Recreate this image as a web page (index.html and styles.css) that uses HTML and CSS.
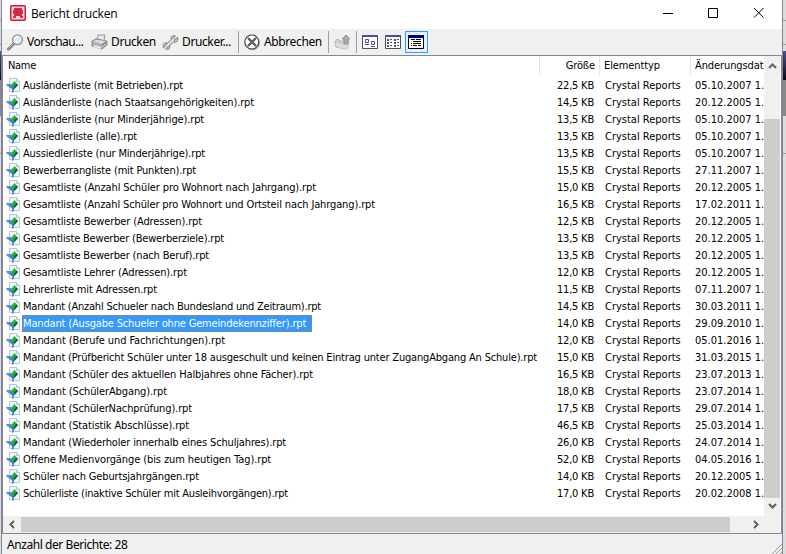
FILE: index.html
```
<!DOCTYPE html>
<html lang="de">
<head>
<meta charset="utf-8">
<title>Bericht drucken</title>
<link rel="stylesheet" href="styles.css">
</head>
<body>
<div class="backdrop left"></div>
<main class="window">
  <header class="titlebar">
    <svg class="app-icon" width="16" height="16" viewBox="0 0 16 16"><rect width="16" height="16" rx="2" fill="#dc143c"/><rect x="1.500" y="1.500" width="13" height="13" rx="1" fill="#f6d5d8"/><path d="M4 3h8v3H4zM3 5h10v4H3zM4 9h8v2H4zM3 11h3v2H3zM10 11h3v2h-3z" fill="#dc3048"/><path d="M5 4.500h6M4 7.500h8M5 10h6" stroke="#a52d40"/></svg>
    <h1>Bericht drucken</h1>
    <svg class="controls" width="110" height="14" viewBox="0 0 110 14" fill="none" stroke="#000"><path d="M1 7.500h10M46.500 2.500h9v9h-9zM92 2l9.500 9.500M101.500 2L92 11.500"/></svg>
  </header>
  <nav class="toolbar">
    <button class="b1"><svg width="17" height="17" viewBox="0 0 17 17"><path d="M1.500 15L7 9.500" stroke="#8c7868" stroke-width="3" stroke-linecap="round"/><path d="M1.500 14.500L6.500 9.500" stroke="#d9c5ae"/><circle cx="10.500" cy="5.800" r="4.900" fill="#dff0fa" stroke="#8b9298" stroke-width="1.300"/><path d="M7.500 5a3 3 0 0 1 4-2" stroke="#fff" fill="none" stroke-width="1.500"/></svg><span>Vorschau...</span></button>
    <button class="b2"><svg width="17" height="17" viewBox="0 0 17 17"><path d="M6 6l1-5h7l-1 6z" fill="#dce7ee" stroke="#99958d"/><path d="M1 7l4-2 11 2v4l-5 4-10-3z" fill="#b2b2b2" stroke="#898989"/><path d="M2 7l3-1 10 1-4 3z" fill="#ddd"/><path d="M3 11l7 2v2l-7-2z" fill="#eee"/><path d="M11 11l4-3" stroke="#666"/></svg><span>Drucken</span></button>
    <button class="b3"><svg width="17" height="17" viewBox="0 0 17 17"><path d="M4.500 12.500L12 5" stroke="#8c8c8c" stroke-width="4"/><path d="M13.500 1.500l-2 2 .5 1.500 1.500.5 2-2c1 3-1 5-4 4.500M3.500 15.500l2-2-.5-1.500-1.500-.5-2 2c-1-3 1-5 4-4.500M12.500 1.500c-3 0-4 2-3 4M5 15.500c2 0 3-2 2.500-4" fill="none" stroke="#8c8c8c" stroke-width="1.200"/><path d="M4.500 12.500L12 5" stroke="#e4e4e4" stroke-width="2.300"/></svg><span>Drucker...</span></button>
    <i class="sep"></i>
    <button class="b4"><svg width="16" height="17" viewBox="0 0 16 17"><circle cx="8.500" cy="8.800" r="7" fill="none" stroke="#aaa"/><circle cx="7.800" cy="8" r="7" fill="#fff" stroke="#444" stroke-width="1.200"/><path d="M4 4l8 8M12 4l-8 8" stroke="#444" stroke-width="2.200"/><path d="M4 4l8 8M12 4l-8 8" stroke="#888" stroke-width=".6"/></svg><span>Abbrechen</span></button>
    <i class="sep"></i>
    <svg class="up" width="17" height="16" viewBox="0 0 17 16"><path d="M1 8l1-2 2-1 2 2h9l-1 7-3 1-9-2z" fill="#ccc" stroke="#b5b5b5"/><path d="M1 9l12 1 2-2-1 6-3 1-8-2z" fill="#dadada"/><path d="M12 1l4 4h-2v5h-4V5H8z" fill="#aaa" stroke="#969696"/></svg>
    <i class="sep"></i>
    <svg class="v1" width="16" height="14" viewBox="0 0 16 14"><path d="M.5.500h15v13H.5z" fill="#fff" stroke="#505050"/><path d="M0 0h16v2H0z" fill="#4b4ba5"/><path d="M3.500 4.500h3v3h-3zM9.500 6.500h3v3h-3zM3 9.500h4M9 11.500h4" fill="none" stroke="#4b4ba5"/></svg>
    <svg class="v2" width="16" height="14" viewBox="0 0 16 14"><path d="M.5.500h15v13H.5z" fill="#fff" stroke="#505050"/><path d="M0 0h16v2H0z" fill="#4b4ba5"/><path d="M2 5h2M2 8h2M2 11h2M9 5h2M9 8h2M9 11h2" stroke="#4b4ba5" stroke-width="2"/><path d="M5 4.500h2M5 7.500h2M5 10.500h2M12 4.500h2M12 7.500h2M12 10.500h2" stroke="#555"/></svg>
    <span class="active"><svg width="16" height="14" viewBox="0 0 16 14"><path d="M.5.500h15v13H.5z" fill="#fff" stroke="#000"/><path d="M0 0h16v3H0z" fill="#000080"/><path d="M3 4.500h4m1 0h5M5 6.500h8M3 8.500h1m1 0h8M3 10.500h1m1 0h4m1 0h3" stroke="#000"/></svg></span>
  </nav>
  <section class="panel">
    <div class="content">
      <div class="heads"><span>Name</span><span>Größe</span><span>Elementtyp</span><span>Änderungsdat</span></div>
      <div id="rows"></div>
    </div>
    <aside class="vscroll"><svg width="9" height="6" viewBox="0 0 9 6"><path d="M1 5l3.500-3.500L8 5" fill="none" stroke="#606060" stroke-width="2"/></svg><div class="vthumb"></div><svg width="9" height="6" viewBox="0 0 9 6"><path d="M1 1l3.500 3.500L8 1" fill="none" stroke="#606060" stroke-width="2"/></svg></aside>
    <div class="hscroll"><svg width="6" height="9" viewBox="0 0 6 9"><path d="M5 1L1.500 4.500 5 8" fill="none" stroke="#606060" stroke-width="2"/></svg><div class="hthumb"></div><svg class="next" width="6" height="9" viewBox="0 0 6 9"><path d="M1 1l3.500 3.500L1 8" fill="none" stroke="#606060" stroke-width="2"/></svg></div>
  </section>
  <footer><span>Anzahl der Berichte: 28</span><svg width="12" height="12" viewBox="0 0 12 12" stroke="#999"><path d="M1 12L12 1M5 12l7-7M9 12l3-3"/></svg></footer>
</main>
<div class="backdrop right"></div>
<script src="rows.js"></script>
</body>
</html>
```
FILE: styles.css
```
* { box-sizing: border-box; }
body { margin: 0; width: 786px; height: 554px; overflow: hidden; display: flex; background: #e5e5e5; color: #000; font: 11px/17px "DejaVu Sans Condensed", "DejaVu Sans", sans-serif; }
svg { flex: none; display: block; }
.backdrop { width: 1px; flex: none; background: linear-gradient(#ddd 0 20px, #999 20px 21px, #ddd 21px 44px, #999 44px 45px, #ddd 45px 51px, #4b5285 51px, #080818 80px, #888 80px 116px, #ddd 116px 153px, #999 153px 154px, #ddd 154px); }
.backdrop.right { width: 3px; }
.window { width: 782px; height: 554px; flex: none; display: flex; flex-direction: column; border: solid #79869b; border-width: 0 1px; }
.titlebar { height: 29px; flex: none; background: #fff; display: flex; padding: 0 10px 0 8px; }
.app-icon { margin-top: 5px; }
h1 { margin: 4px 0 0 5px; font: 12px/20px "Open Sans", sans-serif; letter-spacing: -.15px; white-space: nowrap; }
.controls { margin: 6px 0 0 auto; }
.toolbar { height: 26px; flex: none; background: #f0f0f0; display: flex; align-items: flex-start; padding: 2px 0 0 5px; font: 12px/20px "Noto Sans", sans-serif; letter-spacing: -.38px; }
button { all: unset; box-sizing: border-box; display: flex; height: 22px; flex: none; gap: 3px; white-space: nowrap; }
button svg { margin-top: 3px; }
button span { margin-top: 1px; }
.b1 { width: 84px; letter-spacing: -.5px; }
.b2 { width: 71px; }
.b3 { width: 76px; }
.sep { width: 1px; height: 22px; background: #a0a0a0; flex: none; }
.b4 { width: 89px; padding-left: 5px; gap: 4px; }
.up { margin: 3px 5px 0; }
.v1 { margin: 4px 7px 0 5px; }
.v2 { margin: 4px 4px 0 0; }
.active { width: 23px; height: 22px; border: 1px solid #3399ff; background: #e5f1fb; padding: 3px 0 0 2px; }
.panel { height: 479px; flex: none; border: 1px solid #828790; background: #fff; display: grid; grid-template: 460px 17px / 761px 16px; overflow: hidden; }
.content { overflow: hidden; }
.heads { height: 21px; display: grid; grid-template-columns: 537px 60px 91px 73px; white-space: nowrap; line-height: 18px; letter-spacing: -.1px; background: linear-gradient(#fff 20px, #fff 0); }
.heads span { height: 19px; border-right: 1px solid #e5e5e5; padding: 1px 4px 0; }
.heads span:first-child { padding-left: 5px; letter-spacing: -.3px; }
.heads span:nth-child(2) { text-align: right; }
.heads span:last-child { border: 0; padding-right: 0; }
.row { height: 17px; display: grid; grid-template-columns: 537px 54px 96px 74px; white-space: nowrap; }
.name { display: flex; padding-left: 3px; }
.name svg { margin-top: 1px; }
.label { margin-left: 1px; padding: 0 1px; width: max-content; height: 17px; }
.selected .label { background: #3399ff; color: #fff; outline: 1px dotted #c67631; outline-offset: -1px; padding-right: 6px; }
.size { text-align: right; letter-spacing: -.2px; }
.type { padding-left: 11px; }
.date { padding-left: 5px; }
.vscroll { background: #f0f0f0; display: flex; flex-direction: column; align-items: center; padding-top: 7px; overflow: hidden; }
.vthumb { width: 16px; height: 379px; background: #cdcdcd; margin: 50px 0 5px; flex: none; }
.hscroll { grid-column: 1 / 3; background: #f0f0f0; display: flex; align-items: center; padding-left: 6px; }
.hthumb { height: 15px; width: 709px; background: #cdcdcd; margin-left: 6px; }
.next { margin-left: 23px; }
footer { flex: 1; background: #f0f0f0; padding: 1px 0 0 5px; font: 12px/20px "Noto Sans", sans-serif; letter-spacing: -.43px; display: flex; justify-content: space-between; }
footer svg { align-self: flex-end; }
```
FILE: rows.js
```
// name, size, date, text width in pixels
const reports = [
  ["Ausländerliste (mit Betrieben).rpt", "22,5", "05.10.2007", 160],
  ["Ausländerliste (nach Staatsangehörigkeiten).rpt", "14,5", "20.12.2005", 231],
  ["Ausländerliste (nur Minderjährige).rpt", "13,5", "05.10.2007", 181],
  ["Aussiedlerliste (alle).rpt", "13,5", "05.10.2007", 114],
  ["Aussiedlerliste (nur Minderjährige).rpt", "13,5", "05.10.2007", 182],
  ["Bewerberrangliste (mit Punkten).rpt", "15,5", "27.11.2007", 173],
  ["Gesamtliste (Anzahl Schüler pro Wohnort nach Jahrgang).rpt", "15,0", "20.12.2005", 293],
  ["Gesamtliste (Anzahl Schüler pro Wohnort und Ortsteil nach Jahrgang).rpt", "16,5", "17.02.2011", 352],
  ["Gesamtliste Bewerber (Adressen).rpt", "12,5", "20.12.2005", 179],
  ["Gesamtliste Bewerber (Bewerberziele).rpt", "13,5", "20.12.2005", 201],
  ["Gesamtliste Bewerber (nach Beruf).rpt", "13,5", "20.12.2005", 186],
  ["Gesamtliste Lehrer (Adressen).rpt", "12,0", "20.12.2005", 164],
  ["Lehrerliste mit Adressen.rpt", "11,5", "07.11.2007", 134],
  ["Mandant (Anzahl Schueler nach Bundesland und Zeitraum).rpt", "14,5", "30.03.2011", 298],
  ["Mandant (Ausgabe Schueler ohne Gemeindekennziffer).rpt", "14,0", "29.09.2010", 283],
  ["Mandant (Berufe und Fachrichtungen).rpt", "12,0", "05.01.2016", 202],
  ["Mandant (Prüfbericht Schüler unter 18 ausgeschult und keinen Eintrag unter ZugangAbgang An Schule).rpt", "15,0", "31.03.2015", 514],
  ["Mandant (Schüler des aktuellen Halbjahres ohne Fächer).rpt", "16,5", "23.07.2013", 290],
  ["Mandant (SchülerAbgang).rpt", "18,0", "23.07.2014", 144],
  ["Mandant (SchülerNachprüfung).rpt", "17,5", "29.07.2014", 169],
  ["Mandant (Statistik Abschlüsse).rpt", "46,5", "25.03.2014", 166],
  ["Mandant (Wiederholer innerhalb eines Schuljahres).rpt", "26,0", "24.07.2014", 263],
  ["Offene Medienvorgänge (bis zum heutigen Tag).rpt", "52,0", "04.05.2016", 248],
  ["Schüler nach Geburtsjahrgängen.rpt", "14,0", "20.12.2005", 176],
  ["Schülerliste (inaktive Schüler mit Ausleihvorgängen).rpt", "17,0", "20.02.2008", 265]
];
const icon = '<svg width="15" height="15" viewBox="0 0 15 15"><path d="M3.500.5h7l3 3v10h-10z" fill="#f4f8fd" stroke="#b3c4da"/><path d="M10.500.5v3h3" fill="#dbe6f4" stroke="#b3c4da"/><path d="M0 6h5l3 4v4l-2 1v-4L1 8z" fill="#5a8fe0"/><path d="M8.500 3l3.500 4-3.500 4L5 7z" fill="#20b532"/><path d="M8.500 11L12 7l-1.500-1.500L7.500 9z" fill="#126d28"/><path d="M4 7l4 3.500v2L5 10z" fill="#3671cd"/></svg>';
const rows = document.getElementById("rows");
rows.innerHTML = reports.map(([name, size, date], index) =>
  `<div class="row${index === 14 ? " selected" : ""}"><div class="name">${icon}<span class="label"><span>${name}</span></span></div><span class="size">${size} KB</span><span class="type">Crystal Reports</span><span class="date">${date} 1.</span></div>`
).join("");
rows.querySelectorAll(".label > span").forEach((text, index) => {
  const [name, , , width] = reports[index];
  text.style.letterSpacing = `${(width - text.getBoundingClientRect().width) / name.length}px`;
});
```
